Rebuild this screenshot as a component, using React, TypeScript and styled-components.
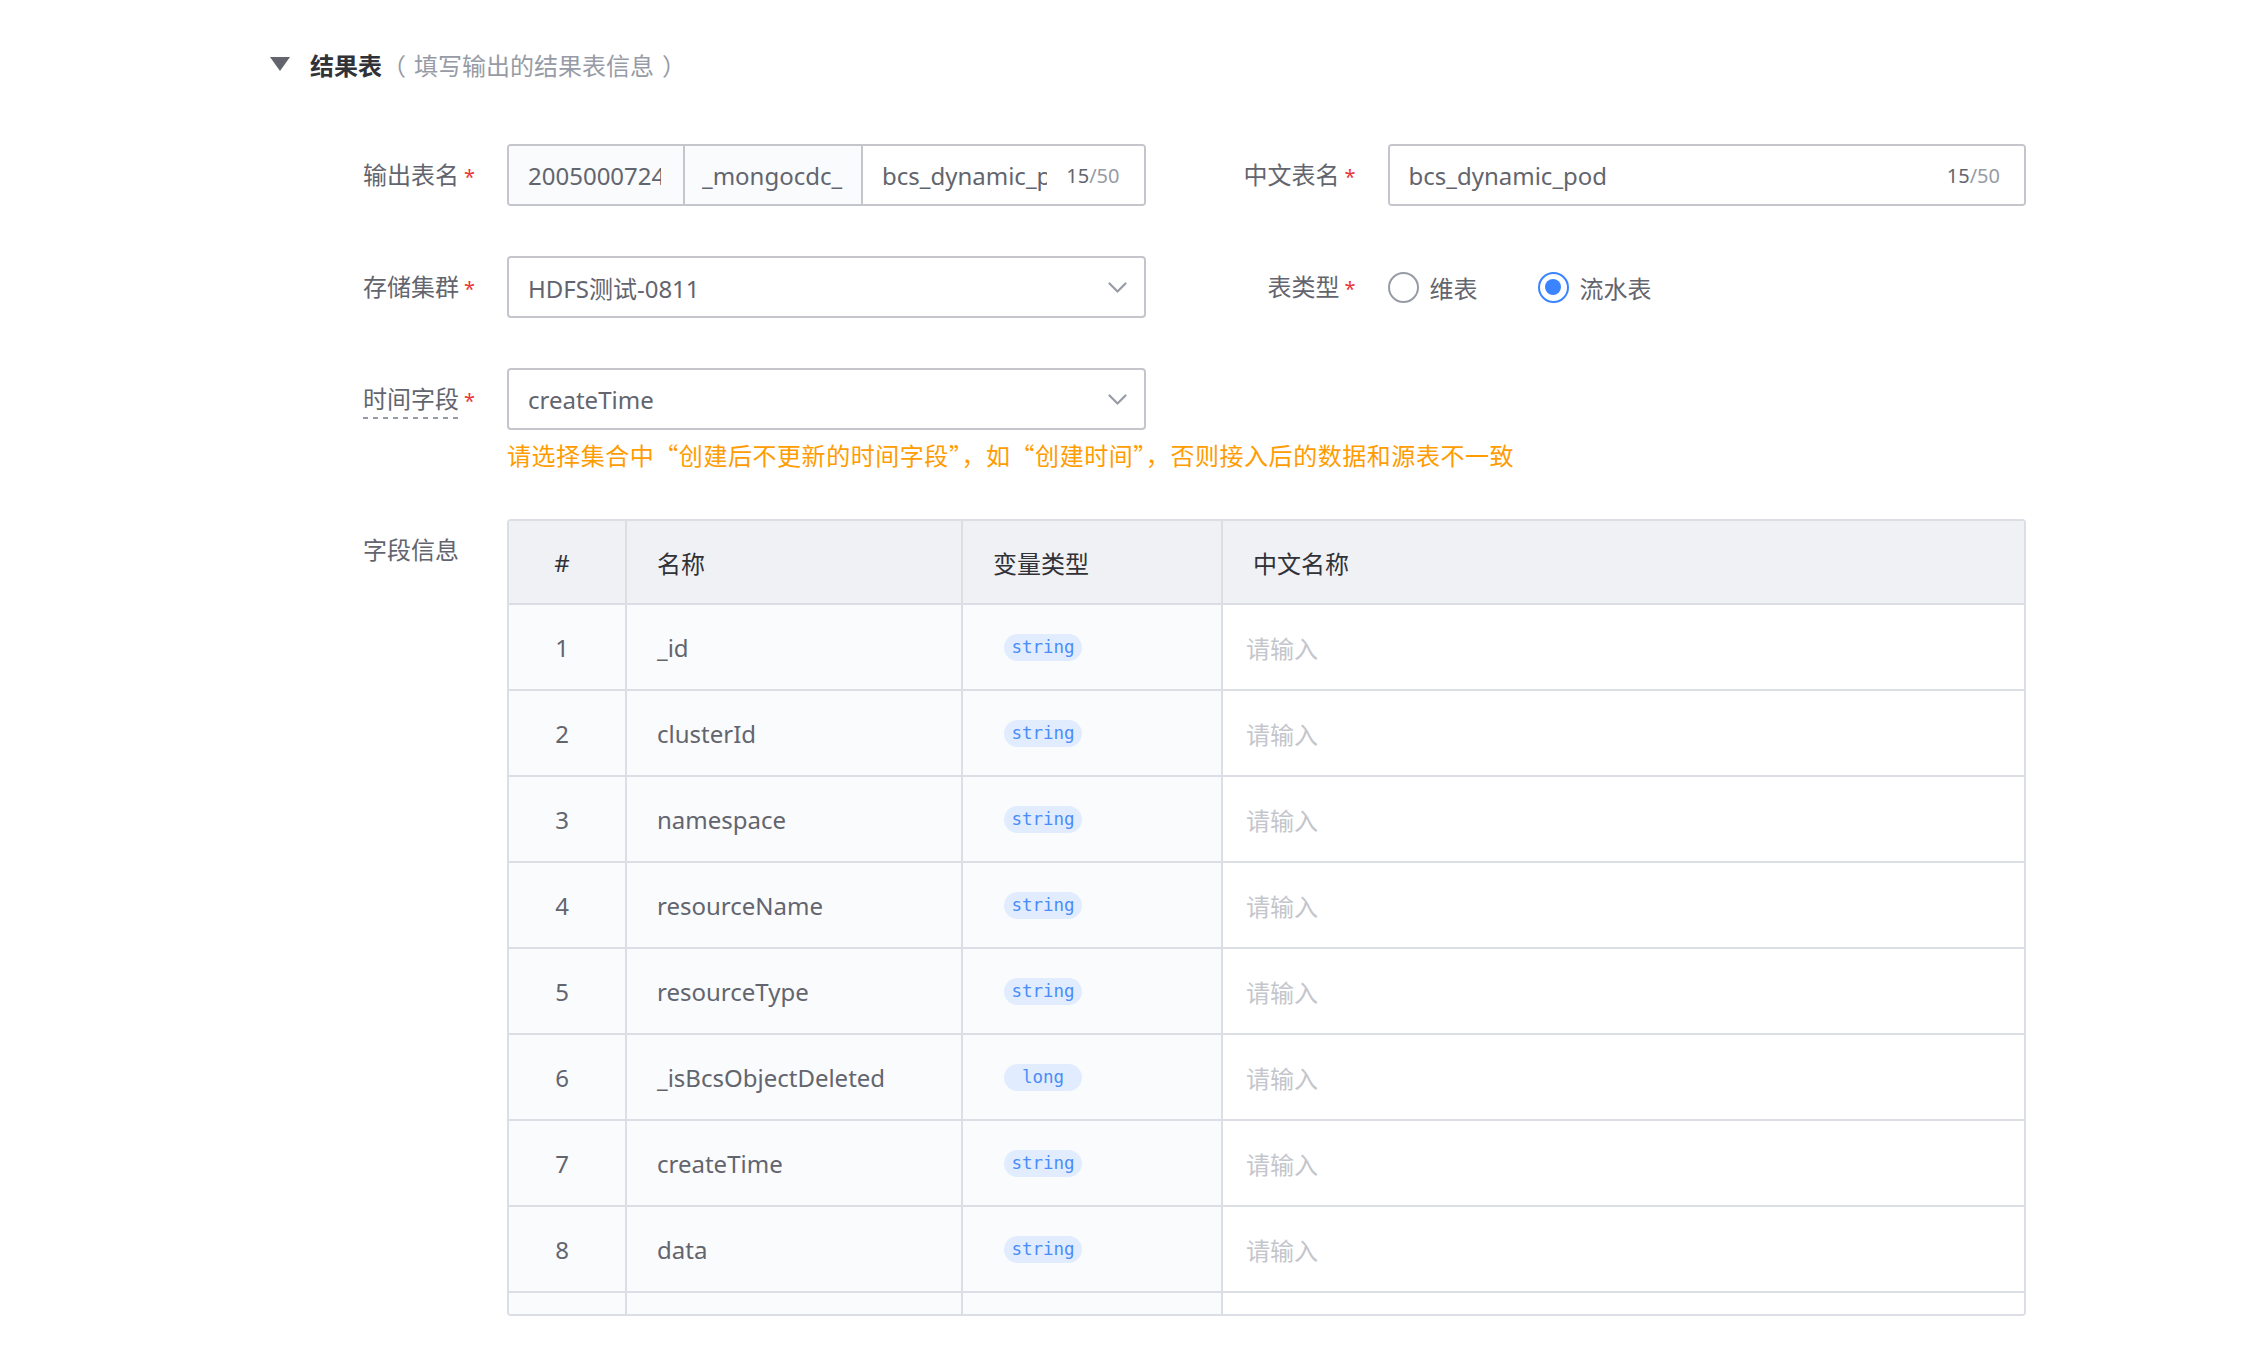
import React from 'react';
import styled, { createGlobalStyle, css } from 'styled-components';

const GlobalStyle = createGlobalStyle`
  html, body { margin: 0; padding: 0; background: #ffffff; }
  body {
    font-family: "Noto Sans", "Noto Sans CJK SC", sans-serif;
    color: #63656e;
  }
  * { box-sizing: border-box; }
`;

const Page = styled.div`
  width: 2266px;
  min-height: 1372px;
  padding-top: 46px;
`;

const SectionHeader = styled.div`
  display: flex;
  align-items: center;
  height: 36px;
  padding-left: 270px;
  gap: 20px;
  font-size: 24px;
`;

const Caret = styled.span`
  width: 0;
  height: 0;
  border-left: 10.5px solid transparent;
  border-right: 10.5px solid transparent;
  border-top: 14px solid #63656e;
`;

const Title = styled.span`
  font-weight: 700;
  color: #313238;
`;

const SubTitle = styled.span`
  color: #979ba5;
  margin-left: -20px;
  white-space: pre;
`;

const Form = styled.div`
  width: 2026px;
  padding-left: 282px;
  margin-top: 62px;
`;

const Row = styled.div<{ $mt?: number }>`
  display: grid;
  grid-template-columns: 1fr 1fr;
  column-gap: 17px;
  margin-top: ${p => (p.$mt ?? 50)}px;
  &:first-child { margin-top: 0; }
`;

const WideRow = styled.div`
  display: flex;
  margin-top: 47px;
`;

const Item = styled.div`
  display: flex;
  align-items: flex-start;
  min-width: 0;
  flex: 1;
`;

const Label = styled.div`
  flex: 0 0 225px;
  height: 62px;
  padding-right: 48px;
  display: flex;
  align-items: center;
  justify-content: flex-end;
  font-size: 24px;
  color: #63656e;
  white-space: nowrap;
`;

const LabelText = styled.span<{ $required?: boolean; $tip?: boolean }>`
  position: relative;
  display: inline-block;
  line-height: 34px;
  ${p =>
    p.$required &&
    css`
      &::after {
        content: '*';
        position: absolute;
        left: calc(100% + 5px);
        top: 50%;
        margin-top: -8px;
        font-size: 20px;
        line-height: 20px;
        color: #ea3636;
      }
    `}
  ${p =>
    p.$tip &&
    css`
      &::before {
        content: '';
        position: absolute;
        left: 0;
        right: 0;
        bottom: -3px;
        height: 2px;
        background-image: linear-gradient(to right, #979ba5 55%, transparent 55%);
        background-size: 10px 2px;
        background-repeat: repeat-x;
      }
    `}
`;

const Control = styled.div`
  flex: 1;
  min-width: 0;
  display: flex;
  flex-direction: column;
`;

const InputGroup = styled.div`
  display: flex;
  height: 62px;
  border: 2px solid #c4c6cc;
  border-radius: 4px;
  overflow: hidden;
  background: #ffffff;
  font-size: 24px;
  color: #63656e;
`;

const Segment = styled.div<{ $width?: number; $disabled?: boolean; $pl?: number; $pr?: number }>`
  flex: ${p => (p.$width ? `0 0 ${p.$width}px` : '1 1 auto')};
  min-width: 0;
  display: flex;
  align-items: center;
  padding: 0 ${p => p.$pr ?? 24}px 0 ${p => p.$pl ?? 19}px;
  background: ${p => (p.$disabled ? '#fafbfd' : '#ffffff')};
  ${p => p.$width && css`border-right: 2px solid #c4c6cc;`}
`;

const SegmentText = styled.span`
  flex: 1;
  min-width: 0;
  overflow: hidden;
  white-space: nowrap;
`;

const Counter = styled.span`
  flex: none;
  margin-left: 19px;
  font-size: 20px;
  color: #979ba5;
  b { font-weight: 400; color: #63656e; }
`;

const Select = styled.div`
  height: 62px;
  border: 2px solid #c4c6cc;
  border-radius: 4px;
  display: flex;
  align-items: center;
  justify-content: space-between;
  padding: 0 17px 0 19px;
  font-size: 24px;
  color: #63656e;
  background: #ffffff;
`;

const Hint = styled.div`
  margin-top: 8px;
  line-height: 34px;
  font-size: 24px;
  letter-spacing: 0.55px;
  color: #ff9c01;
  font-family: "Noto Sans CJK SC", "Noto Sans", sans-serif;
  white-space: nowrap;
`;

const RadioGroup = styled.div`
  height: 62px;
  display: flex;
  align-items: center;
  gap: 60px;
`;

const RadioItem = styled.label`
  display: flex;
  align-items: center;
  gap: 11px;
  font-size: 24px;
  color: #63656e;
`;

const RadioCircle = styled.span<{ $checked?: boolean }>`
  width: 31px;
  height: 31px;
  border-radius: 50%;
  border: 2px solid ${p => (p.$checked ? '#3a84ff' : '#979ba5')};
  display: flex;
  align-items: center;
  justify-content: center;
  &::after {
    content: '';
    width: 16px;
    height: 16px;
    border-radius: 50%;
    background: ${p => (p.$checked ? '#3a84ff' : 'transparent')};
  }
`;

const TableWrap = styled.div`
  flex: 1;
  height: 797px;
  border: 2px solid #dcdee5;
  border-radius: 4px;
  overflow: hidden;
`;

const TableGrid = styled.div`
  display: grid;
  grid-template-columns: 118px 336px 260px 1fr;
`;

const Cell = styled.div<{ $head?: boolean; $center?: boolean; $white?: boolean; $last?: boolean }>`
  height: ${p => (p.$head ? 84 : 86)}px;
  border-bottom: 2px solid #dcdee5;
  border-right: ${p => (p.$last ? 'none' : '2px solid #dcdee5')};
  background: ${p => (p.$head ? '#f0f1f5' : p.$white ? '#ffffff' : '#fafbfd')};
  display: flex;
  align-items: center;
  justify-content: ${p => (p.$center ? 'center' : 'flex-start')};
  padding: ${p => (p.$center ? '0 10px 0 0' : '0 0 0 30px')};
  font-size: 24px;
  color: ${p => (p.$head ? '#313238' : '#63656e')};
  white-space: nowrap;
  overflow: hidden;
`;

const Placeholder = styled.span`
  margin-left: -7px;
  color: #c4c6cc;
`;

const TypeTag = styled.span`
  margin-left: 11px;
  width: 78px;
  height: 27px;
  border-radius: 14px;
  background: #e1ecff;
  color: #4a8df8;
  font-family: "DejaVu Sans Mono", "Liberation Mono", monospace;
  font-size: 17.5px;
  display: flex;
  align-items: center;
  justify-content: center;
`;

const Chevron = () => (
  <svg width="19" height="11" viewBox="0 0 19 11" fill="none">
    <polyline points="1.5,1.5 9.5,9.5 17.5,1.5" stroke="#979ba5" strokeWidth="2.2" strokeLinecap="round" strokeLinejoin="round" />
  </svg>
);

const fields: [string, string][] = [
  ['_id', 'string'],
  ['clusterId', 'string'],
  ['namespace', 'string'],
  ['resourceName', 'string'],
  ['resourceType', 'string'],
  ['_isBcsObjectDeleted', 'long'],
  ['createTime', 'string'],
  ['data', 'string'],
  ['updateTime', 'string'],
];

export default function App() {
  return (
    <>
      <GlobalStyle />
      <Page>
        <SectionHeader>
          <Caret />
          <Title>结果表</Title>
          <SubTitle>{'（\u2004填写输出的结果表信息\u2004）'}</SubTitle>
        </SectionHeader>
        <Form>
          <Row>
            <Item>
              <Label><LabelText $required>输出表名</LabelText></Label>
              <Control>
                <InputGroup>
                  <Segment $width={176} $disabled $pr={22}><SegmentText>2005000724</SegmentText></Segment>
                  <Segment $width={178} $disabled $pl={17} $pr={10}><SegmentText>_mongocdc_</SegmentText></Segment>
                  <Segment>
                    <SegmentText>bcs_dynamic_pod</SegmentText>
                    <Counter><b>15</b>/50</Counter>
                  </Segment>
                </InputGroup>
              </Control>
            </Item>
            <Item>
              <Label><LabelText $required>中文表名</LabelText></Label>
              <Control>
                <InputGroup>
                  <Segment>
                    <SegmentText>bcs_dynamic_pod</SegmentText>
                    <Counter><b>15</b>/50</Counter>
                  </Segment>
                </InputGroup>
              </Control>
            </Item>
          </Row>
          <Row>
            <Item>
              <Label><LabelText $required>存储集群</LabelText></Label>
              <Control>
                <Select>
                  <span>HDFS测试-0811</span>
                  <Chevron />
                </Select>
              </Control>
            </Item>
            <Item>
              <Label><LabelText $required>表类型</LabelText></Label>
              <Control>
                <RadioGroup>
                  <RadioItem><RadioCircle />维表</RadioItem>
                  <RadioItem><RadioCircle $checked />流水表</RadioItem>
                </RadioGroup>
              </Control>
            </Item>
          </Row>
          <Row>
            <Item>
              <Label><LabelText $required $tip>时间字段</LabelText></Label>
              <Control>
                <Select>
                  <span>createTime</span>
                  <Chevron />
                </Select>
                <Hint>请选择集合中“创建后不更新的时间字段”，如“创建时间”，否则接入后的数据和源表不一致</Hint>
              </Control>
            </Item>
          </Row>
          <WideRow>
            <Item>
              <Label><LabelText>字段信息</LabelText></Label>
              <TableWrap>
                <TableGrid>
                  <Cell $head $center>#</Cell>
                  <Cell $head>名称</Cell>
                  <Cell $head>变量类型</Cell>
                  <Cell $head $last>中文名称</Cell>
                  {fields.map(([name, type], i) => (
                    <React.Fragment key={name}>
                      <Cell $center>{i + 1}</Cell>
                      <Cell>{name}</Cell>
                      <Cell><TypeTag>{type}</TypeTag></Cell>
                      <Cell $white $last><Placeholder>请输入</Placeholder></Cell>
                    </React.Fragment>
                  ))}
                </TableGrid>
              </TableWrap>
            </Item>
          </WideRow>
        </Form>
      </Page>
    </>
  );
}
